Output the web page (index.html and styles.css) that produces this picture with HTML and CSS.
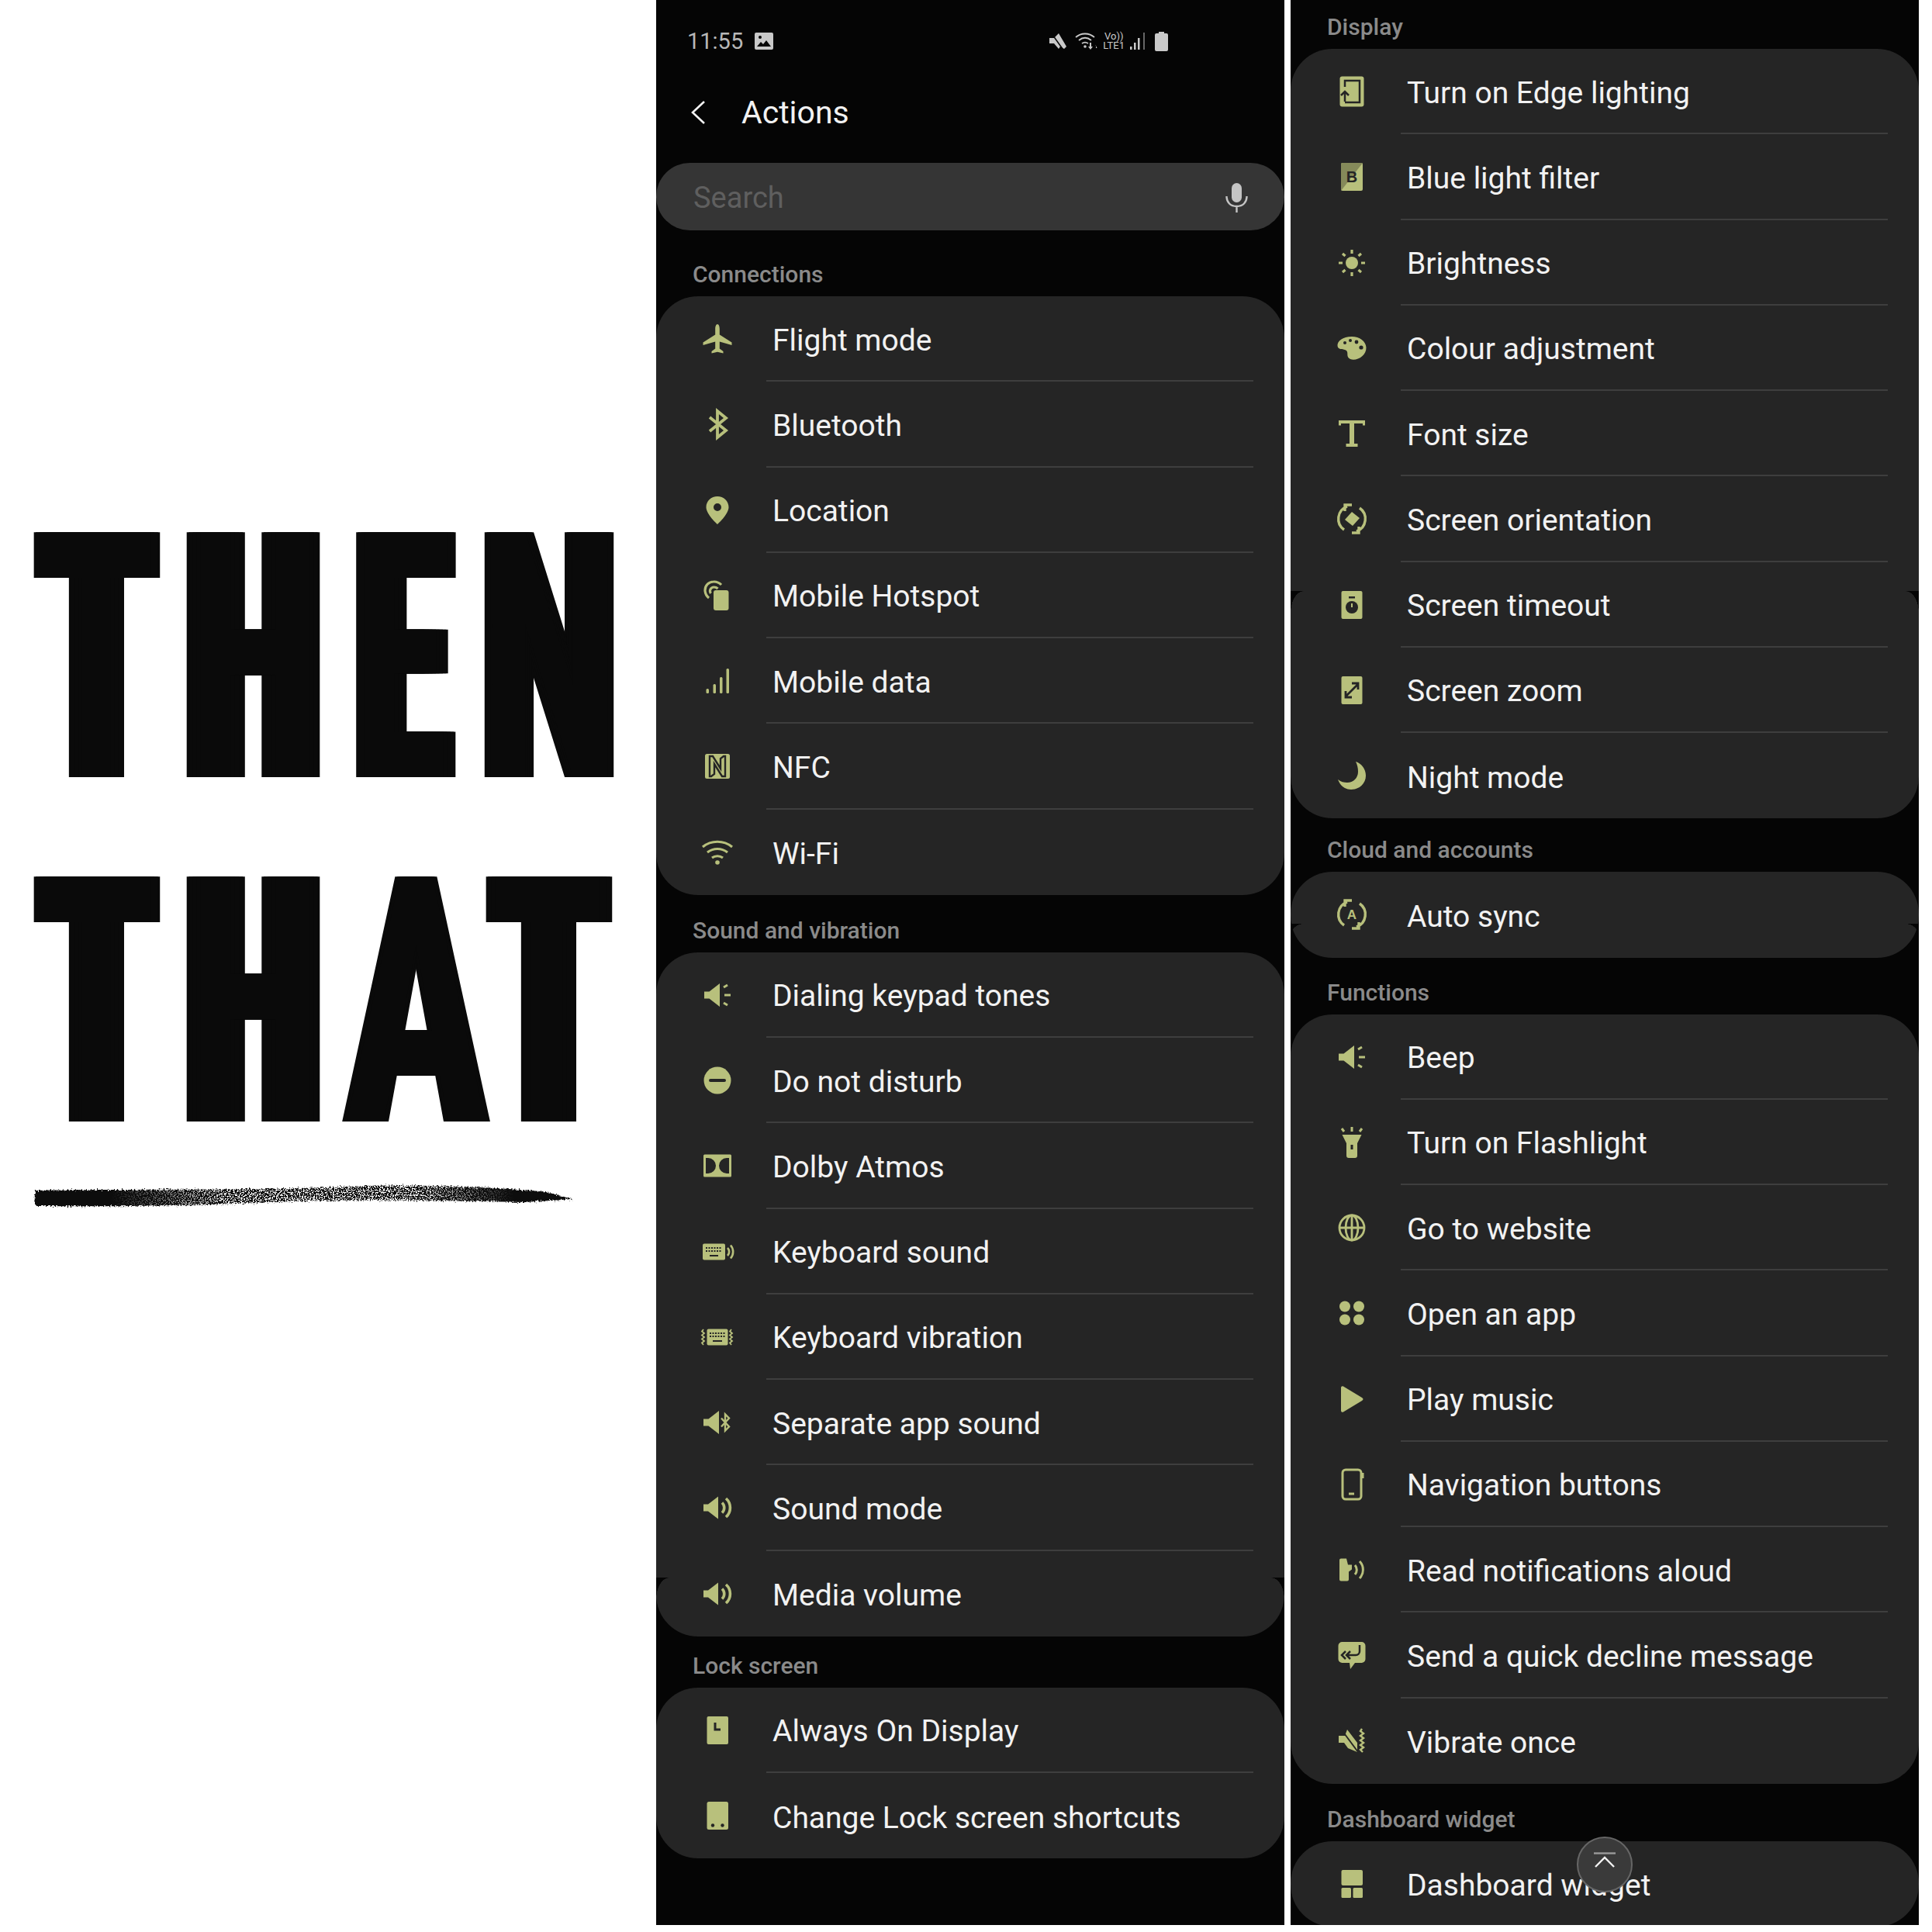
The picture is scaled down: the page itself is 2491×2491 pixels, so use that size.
FILE: index.html
```html
<!DOCTYPE html>
<html>
<head>
  <title>If This Then That - Actions</title>
  <link rel="stylesheet" href="styles.css">
</head>
<body>
  <!-- Shared icons -->
  <svg class="icon-defs" xmlns="http://www.w3.org/2000/svg">
    <symbol id="i-flight" viewBox="0 0 48 48"><path d="M24 5c1.800 0 2.800 3 2.800 6v7.500l15.700 10v3.500l-15.700-4.500v9l4.700 3.500v2.500l-7.500-1.700-7.500 1.700v-2.500l4.700-3.500v-9L5.500 32v-3.500l15.700-10V11c0-3 1-6 2.800-6z"/></symbol>
    <symbol id="i-bluetooth" viewBox="0 0 48 48"><path class="line" stroke-width="3.800" d="M14 15l21 17-11 9V7l11 9-21 17"/></symbol>
    <symbol id="i-location" viewBox="0 0 48 48"><path fill-rule="evenodd" d="M24 6C16 6 9.500 12 9.500 20c0 9 14.500 22 14.500 22s14.500-13 14.500-22C38.500 12 32 6 24 6zm0 9a5 5 0 1 1 0 10 5 5 0 0 1 0-10z"/></symbol>
    <symbol id="i-hotspot" viewBox="0 0 48 48"><rect x="19" y="17" width="19.500" height="26" rx="3"/><path class="line" stroke-width="3.200" d="M13 27a13.500 13.500 0 0 1-5-10 11 11 0 0 1 11-11 13 13 0 0 1 10 4"/><path class="line" stroke-width="3.200" d="M15.500 21a5 5 0 0 1 4-8 7 7 0 0 1 5 2"/></symbol>
    <symbol id="i-data" viewBox="0 0 48 48"><rect x="9.500" y="34" width="3.500" height="6" rx="1.500"/><rect x="18.500" y="28" width="3.500" height="12" rx="1.500"/><rect x="27" y="19" width="3.500" height="21" rx="1.500"/><rect x="35.500" y="8" width="3.500" height="32" rx="1.500"/></symbol>
    <symbol id="i-nfc" viewBox="0 0 48 48"><rect x="8" y="8" width="32" height="32" rx="2.500"/><path class="cut-line" stroke-width="2.400" d="M14 11v26h2l4-3V21l10 16h4V11h-2l-4 3v13L18 11z"/></symbol>
    <symbol id="i-wifi" viewBox="0 0 48 48"><path class="line" stroke-width="3.200" d="M5 17c11-9 27-9 38 0M11 24c8-6 18-6 26 0M17 31c4-3 10-3 14 0"/><circle cx="24" cy="37" r="2.800"/></symbol>
    <symbol id="i-beep" viewBox="0 0 48 48"><path d="M7 19.500h6.500L27 9v30L13.500 28.500H7z"/><path class="line" stroke-width="3" d="M32 14l5-3M33 24h8M32 34l5 3"/></symbol>
    <symbol id="i-dnd" viewBox="0 0 48 48"><circle cx="24" cy="24" r="17.500"/><rect class="cut" x="13" y="22" width="22" height="4" rx="2"/></symbol>
    <symbol id="i-dolby" viewBox="0 0 48 48"><rect x="6" y="9.500" width="36" height="29" rx="1.500"/><path class="cut" d="M9 14h3a10 10 0 0 1 0 20H9zM39 14h-3a10 10 0 0 0 0 20h3z"/></symbol>
    <symbol id="i-kb-sound" viewBox="0 0 48 48"><rect x="5" y="13.500" width="29" height="21" rx="2"/><path class="cut-line" stroke-width="2" stroke-dasharray="2 1.500" d="M9 19h21M9 23h21"/><path class="cut-line" stroke-width="2" d="M14 29h11"/><path class="line" stroke-width="2.600" d="M37 19a7 7 0 0 1 0 10M41 15.500a13 13 0 0 1 0 17"/></symbol>
    <symbol id="i-kb-vibrate" viewBox="0 0 48 48"><rect x="10.500" y="13.500" width="27" height="21" rx="2"/><path class="cut-line" stroke-width="2" stroke-dasharray="2 1.500" d="M14 19h20M14 23h20"/><path class="cut-line" stroke-width="2" d="M18 29h12"/><path class="line" stroke-width="1.800" d="M6 14l-2 2.500 3 2.500-3 2.500 3 2.500-3 2.500 3 2.500-3 2.500 2 2.500M42 14l-2 2.500 3 2.500-3 2.500 3 2.500-3 2.500 3 2.500-3 2.500 2 2.500"/></symbol>
    <symbol id="i-app-sound" viewBox="0 0 48 48"><path d="M6 19.500h6.500L26 9v30L12.500 28.500H6z"/><path class="line" stroke-width="2.400" d="M29 18.500l10 11-5 5v-21l5 5-10 11"/></symbol>
    <symbol id="i-sound" viewBox="0 0 48 48"><path d="M6 19.500h6L25 9.500v29L12 28.500H6z"/><path class="line" stroke-width="3.600" d="M30 17.500a9 9 0 0 1 0 13M35 12a16 16 0 0 1 0 24"/></symbol>
    <symbol id="i-aod" viewBox="0 0 48 48"><rect x="10.500" y="6" width="27.500" height="36" rx="2"/><path class="cut-line" stroke-width="3" d="M21 14v9h7"/></symbol>
    <symbol id="i-lock" viewBox="0 0 48 48"><rect x="10.500" y="6" width="27.500" height="36" rx="2.500"/><circle class="cut" cx="18" cy="36.500" r="2.200"/><circle class="cut" cx="30.500" cy="36.500" r="2.200"/></symbol>
    <symbol id="i-edge" viewBox="0 0 48 48"><rect x="8.500" y="4.500" width="31" height="39" rx="3"/><path class="cut-line" stroke-width="2.500" d="M15 18V10h19v28H15"/><path class="cut-line" stroke-width="2.500" d="M15 37V24M10 29l5-5 5 5"/></symbol>
    <symbol id="i-blue" viewBox="0 0 48 48"><rect x="10" y="6" width="28" height="36" rx="2"/><path class="tone" d="M12 6h26L10 42V8a2 2 0 0 1 2-2z"/></symbol>
    <symbol id="i-bright" viewBox="0 0 48 48"><circle cx="24" cy="24" r="8"/><path class="line" stroke-width="3.200" d="M24 7v5M24 36v5M7 24h5M36 24h5M12 12l3.500 3M36 12l-3.500 3M12 36l3.500-3M36 36l-3.500-3"/></symbol>
    <symbol id="i-palette" viewBox="0 0 48 48"><path d="M24 9C12 9 5 15 5.500 21c.5 6 8.500 3 11.500 6s-1 8 5 11c8 3 21-4 20.500-15C42 15 34 9 24 9z"/><circle class="cut" cx="15" cy="17" r="2"/><circle class="cut" cx="22" cy="14" r="2"/><circle class="cut" cx="30" cy="16" r="2.400"/><circle class="cut" cx="36" cy="23" r="2.600"/></symbol>
    <symbol id="i-font" viewBox="0 0 48 48"><path d="M7 7h34v6.500h-3V11H27v26h4.500v4h-15v-4H21V11H10v2.500H7z"/></symbol>
    <symbol id="i-orient" viewBox="0 0 48 48"><path class="line" stroke-width="3.400" d="M14 38A17 17 0 0 1 18 8M34 10a17 17 0 0 1-4 30M24 6h-9v8M24 42h9v-8"/><path d="M24 15l10 8-9 10-10-8z"/></symbol>
    <symbol id="i-timeout" viewBox="0 0 48 48"><rect x="10.500" y="6" width="27" height="36" rx="2"/><circle class="cut" cx="24" cy="27" r="8"/><rect class="cut" x="20" y="13" width="8" height="2.500"/><path class="line" stroke-width="2" d="M24 22v5"/></symbol>
    <symbol id="i-zoom" viewBox="0 0 48 48"><rect x="10.500" y="6" width="27" height="36" rx="2"/><path class="cut-line" stroke-width="2.800" d="M17 31l14-14M24 15h8v8M16 25v8h8"/></symbol>
    <symbol id="i-night" viewBox="0 0 48 48"><path d="M29 6c7 2 13 9 13 18 0 10-8 18-19 18-8 0-14-5-17-13 4 3 8 4 12 4 8 0 14-6 14-14 0-5-1-9-3-13z"/></symbol>
    <symbol id="i-sync" viewBox="0 0 48 48"><path class="line" stroke-width="3.400" d="M14 38A17 17 0 0 1 18 8M34 10a17 17 0 0 1-4 30M24 6h-9v8M24 42h9v-8"/></symbol>
    <symbol id="i-flash" viewBox="0 0 48 48"><path d="M11.500 14h25L31 25v16a3 3 0 0 1-3 3h-8a3 3 0 0 1-3-3V25z"/><rect class="cut" x="22.500" y="27" width="3" height="6"/><path class="line" stroke-width="3" d="M24 4v6M11 6l3 4M37 6l-3 4"/></symbol>
    <symbol id="i-globe" viewBox="0 0 48 48"><g class="line" stroke-width="2.800"><circle cx="24" cy="24" r="16"/><ellipse cx="24" cy="24" rx="8" ry="16"/><path d="M8 24h32M24 8v32"/></g></symbol>
    <symbol id="i-apps" viewBox="0 0 48 48"><circle cx="15" cy="15.500" r="7"/><circle cx="33" cy="15.500" r="7"/><circle cx="15" cy="32.500" r="7"/><circle cx="33" cy="32.500" r="7"/></symbol>
    <symbol id="i-play" viewBox="0 0 48 48"><path d="M10 9.500c0-2 1.500-2.800 3-2L37 22c2 1.200 2 2.800 0 4L13 40.500c-1.500.8-3 0-3-2z"/></symbol>
    <symbol id="i-nav" viewBox="0 0 48 48"><rect class="line" stroke-width="3" x="12" y="5" width="24" height="38" rx="4"/><path class="line" stroke-width="3" d="M20 36h7M38 9v7"/></symbol>
    <symbol id="i-read" viewBox="0 0 48 48"><path d="M8 11.500a2 2 0 0 1 2-2h7l2 8h5v6l-4 3v10a2 2 0 0 1-2 2H10a2 2 0 0 1-2-2z"/><path class="line" stroke-width="3" d="M28 18a9 9 0 0 1 0 12M34 13a16 16 0 0 1 0 22"/></symbol>
    <symbol id="i-decline" viewBox="0 0 48 48"><path d="M11.500 7h25a5 5 0 0 1 5 5v17a5 5 0 0 1-5 5H28l-6 8-1-8h-9.500a5 5 0 0 1-5-5V12a5 5 0 0 1 5-5z"/><path class="cut-line" stroke-width="2.500" d="M34 11v8a5 5 0 0 1-5 5H17M22 19l-5 5 5 5M16 19l-5 5 5 5"/></symbol>
    <symbol id="i-vibrate" viewBox="0 0 48 48"><path d="M7 17h8l3-8 13 17v12l-12-5-5-7H7z"/><path class="cut-line" stroke-width="2" d="M9 7l23 31"/><path class="line" stroke-width="2.400" d="M37 8l-2 3 4 3-4 3 4 3-4 3 4 3-4 3 4 3-4 3 3 3"/></symbol>
    <symbol id="i-widget" viewBox="0 0 48 48"><rect x="10.500" y="6" width="27.500" height="20" rx="2"/><rect x="10.500" y="29" width="12.500" height="13" rx="1.500"/><rect x="25.500" y="29" width="12.500" height="13" rx="1.500"/></symbol>
  </svg>

  <div class="page">
    <div class="poster">
      <h1 class="poster-word">
        <span class="glyph glyph-t">T</span><span class="glyph glyph-h">H</span><span class="glyph glyph-e">E</span><span class="glyph glyph-n">N</span>
      </h1>
      <h1 class="poster-word poster-word-second">
        <span class="glyph glyph-t">T</span><span class="glyph glyph-h">H</span><span class="glyph glyph-a">A</span><span class="glyph glyph-t glyph-t-end">T</span>
      </h1>
      <svg class="brush" viewBox="0 0 696 34" xmlns="http://www.w3.org/2000/svg">
        <defs>
          <filter id="rough" x="-2%" y="-30%" width="104%" height="160%">
            <feTurbulence type="fractalNoise" baseFrequency="0.5" numOctaves="2" seed="4"/>
            <feDisplacementMap in="SourceGraphic" scale="7"/>
          </filter>
          <filter id="grain" x="0" y="0" width="100%" height="100%">
            <feTurbulence type="fractalNoise" baseFrequency="0.6" numOctaves="3" seed="9"/>
            <feColorMatrix values="0 0 0 0 1  0 0 0 0 1  0 0 0 0 1  0 0 0 12 -6"/>
            <feComposite in2="SourceAlpha" operator="in"/>
          </filter>
          <linearGradient id="grain-fade">
            <stop offset="0" stop-color="#000"/>
            <stop offset="0.3" stop-color="#fff"/>
            <stop offset="0.75" stop-color="#fff"/>
            <stop offset="1" stop-color="#000"/>
          </linearGradient>
          <mask id="grain-mask" maskUnits="userSpaceOnUse" x="100" y="0" width="520" height="34">
            <rect x="100" y="0" width="520" height="34" fill="url(#grain-fade)"/>
          </mask>
        </defs>
        <path filter="url(#rough)" fill="#080808" d="M3 11C100 9 300 11 400 6c100-4 200 1 262 7l33 9-60 4c-100-2-200-4-300-1-100 5-200 7-330 6C1 30 1 20 3 11z"/>
        <rect filter="url(#grain)" mask="url(#grain-mask)" x="100" y="0" width="520" height="34" fill="#fff"/>
      </svg>
    </div>

    <div class="phone">
      <div class="status-bar">
        <span class="status-time">11:55</span>
        <svg class="status-image" viewBox="0 0 24 22"><path fill="#c9c9c9" fill-rule="evenodd" d="M2 0h20a2 2 0 0 1 2 2v18a2 2 0 0 1-2 2H2a2 2 0 0 1-2-2V2a2 2 0 0 1 2-2zM3 18h18l-6-8-4 5-3-3zM7 4a2 2 0 1 0 0 4 2 2 0 0 0 0-4z"/></svg>
        <div class="status-right">
          <svg class="status-mute" viewBox="0 0 24 24"><path fill="#c9c9c9" d="M1 8h6l6-6 10 17-3 3-5-3-2 3-6-7H1z"/><path stroke="#050505" stroke-width="1.500" d="M3 1l15 21"/></svg>
          <svg class="status-wifi" viewBox="0 0 30 24"><path fill="none" stroke="#c9c9c9" stroke-width="1.800" d="M1 7c7-6 17-6 24 0M5 11c5-4 11-4 16 0M9 15c3-2 5-2 8 0"/><circle cx="13" cy="19" r="1.800" fill="#c9c9c9"/><path fill="#c9c9c9" d="M19 14h2v5h2l-3 4-3-4h2zM26 17h1v4h1.500l-2-4z"/></svg>
          <div class="status-net"><span>Vo))</span><span>LTE1</span></div>
          <svg class="status-signal" viewBox="0 0 21 22"><g fill="#c9c9c9"><rect x="0" y="18" width="2.500" height="4"/><rect x="5" y="13" width="2.500" height="9"/><rect x="10" y="7" width="2.500" height="15"/></g><rect x="17" y="0" width="2" height="22" fill="#666"/></svg>
          <svg class="status-battery" viewBox="0 0 17 25"><path fill="#c9c9c9" d="M5 0h7v2h3a2 2 0 0 1 2 2v19a2 2 0 0 1-2 2H2a2 2 0 0 1-2-2V4a2 2 0 0 1 2-2h3z"/></svg>
        </div>
      </div>
      <div class="title-bar">
        <svg class="back-icon" viewBox="0 0 20 30"><path fill="none" stroke="#f2f2f2" stroke-width="2.600" d="M18 1L3 15l15 14"/></svg>
        <span class="title">Actions</span>
      </div>
      <div class="search">
        <span class="search-text">Search</span>
        <svg class="mic-icon" viewBox="0 0 29 38"><rect x="8" y="0" width="13" height="25" rx="6.500" fill="#c4c4c4"/><path fill="none" stroke="#c4c4c4" stroke-width="2.400" d="M1.500 17c0 8 5 13 13 13s13-5 13-13M14.500 30v8"/></svg>
      </div>

      <div class="section-label section-label-connections">Connections</div>
      <div class="card">
        <div class="row"><svg class="row-icon"><use href="#i-flight"/></svg><div class="row-text">Flight mode</div></div>
        <div class="row"><svg class="row-icon"><use href="#i-bluetooth"/></svg><div class="row-text">Bluetooth</div></div>
        <div class="row"><svg class="row-icon"><use href="#i-location"/></svg><div class="row-text">Location</div></div>
        <div class="row"><svg class="row-icon"><use href="#i-hotspot"/></svg><div class="row-text">Mobile Hotspot</div></div>
        <div class="row"><svg class="row-icon"><use href="#i-data"/></svg><div class="row-text">Mobile data</div></div>
        <div class="row"><svg class="row-icon"><use href="#i-nfc"/></svg><div class="row-text">NFC</div></div>
        <div class="row"><svg class="row-icon"><use href="#i-wifi"/></svg><div class="row-text">Wi-Fi</div></div>
      </div>

      <div class="section-label">Sound and vibration</div>
      <div class="card">
        <div class="row"><svg class="row-icon"><use href="#i-beep"/></svg><div class="row-text">Dialing keypad tones</div></div>
        <div class="row"><svg class="row-icon"><use href="#i-dnd"/></svg><div class="row-text">Do not disturb</div></div>
        <div class="row"><svg class="row-icon"><use href="#i-dolby"/></svg><div class="row-text">Dolby Atmos</div></div>
        <div class="row"><svg class="row-icon"><use href="#i-kb-sound"/></svg><div class="row-text">Keyboard sound</div></div>
        <div class="row"><svg class="row-icon"><use href="#i-kb-vibrate"/></svg><div class="row-text">Keyboard vibration</div></div>
        <div class="row"><svg class="row-icon"><use href="#i-app-sound"/></svg><div class="row-text">Separate app sound</div></div>
        <div class="row"><svg class="row-icon"><use href="#i-sound"/></svg><div class="row-text">Sound mode</div></div>
        <div class="row"><svg class="row-icon"><use href="#i-sound"/></svg><div class="row-text">Media volume</div></div>
        <!-- screenshot seam, the capture was stitched here -->
        <span class="notch notch-left notch-media"></span>
        <span class="notch notch-right notch-media"></span>
      </div>

      <div class="section-label section-label-lock">Lock screen</div>
      <div class="card">
        <div class="row"><svg class="row-icon"><use href="#i-aod"/></svg><div class="row-text">Always On Display</div></div>
        <div class="row"><svg class="row-icon"><use href="#i-lock"/></svg><div class="row-text">Change Lock screen shortcuts</div></div>
      </div>
    </div>

    <div class="phone phone-second">
      <div class="section-label section-label-first">Display</div>
      <div class="card">
        <div class="row"><svg class="row-icon"><use href="#i-edge"/></svg><div class="row-text">Turn on Edge lighting</div></div>
        <div class="row"><svg class="row-icon" viewBox="0 0 48 48"><use href="#i-blue"/><text class="icon-letter icon-letter-b" x="24" y="31" text-anchor="middle">B</text></svg><div class="row-text">Blue light filter</div></div>
        <div class="row"><svg class="row-icon"><use href="#i-bright"/></svg><div class="row-text">Brightness</div></div>
        <div class="row"><svg class="row-icon"><use href="#i-palette"/></svg><div class="row-text">Colour adjustment</div></div>
        <div class="row"><svg class="row-icon"><use href="#i-font"/></svg><div class="row-text">Font size</div></div>
        <div class="row"><svg class="row-icon"><use href="#i-orient"/></svg><div class="row-text">Screen orientation</div></div>
        <div class="row"><svg class="row-icon"><use href="#i-timeout"/></svg><div class="row-text">Screen timeout</div></div>
        <div class="row"><svg class="row-icon"><use href="#i-zoom"/></svg><div class="row-text">Screen zoom</div></div>
        <div class="row"><svg class="row-icon"><use href="#i-night"/></svg><div class="row-text">Night mode</div></div>
        <span class="notch notch-left notch-timeout"></span>
        <span class="notch notch-right notch-timeout"></span>
      </div>

      <div class="section-label section-label-cloud">Cloud and accounts</div>
      <div class="card">
        <div class="row"><svg class="row-icon" viewBox="0 0 48 48"><use href="#i-sync"/><text class="icon-letter icon-letter-a" x="24" y="30" text-anchor="middle">A</text></svg><div class="row-text">Auto sync</div></div>
        <span class="notch notch-left notch-sync"></span>
        <span class="notch notch-right notch-sync"></span>
      </div>

      <div class="section-label section-label-functions">Functions</div>
      <div class="card">
        <div class="row"><svg class="row-icon"><use href="#i-beep"/></svg><div class="row-text">Beep</div></div>
        <div class="row"><svg class="row-icon"><use href="#i-flash"/></svg><div class="row-text">Turn on Flashlight</div></div>
        <div class="row"><svg class="row-icon"><use href="#i-globe"/></svg><div class="row-text">Go to website</div></div>
        <div class="row"><svg class="row-icon"><use href="#i-apps"/></svg><div class="row-text">Open an app</div></div>
        <div class="row"><svg class="row-icon"><use href="#i-play"/></svg><div class="row-text">Play music</div></div>
        <div class="row"><svg class="row-icon"><use href="#i-nav"/></svg><div class="row-text">Navigation buttons</div></div>
        <div class="row"><svg class="row-icon"><use href="#i-read"/></svg><div class="row-text">Read notifications aloud</div></div>
        <div class="row"><svg class="row-icon"><use href="#i-decline"/></svg><div class="row-text">Send a quick decline message</div></div>
        <div class="row"><svg class="row-icon"><use href="#i-vibrate"/></svg><div class="row-text">Vibrate once</div></div>
      </div>

      <div class="section-label">Dashboard widget</div>
      <div class="card">
        <div class="row"><svg class="row-icon"><use href="#i-widget"/></svg><div class="row-text">Dashboard widget</div></div>
      </div>

      <div class="scroll-top">
        <svg class="scroll-top-icon" viewBox="0 0 28 20"><path fill="none" stroke="#9a9a9a" stroke-width="2.400" d="M0 1.500h28"/><path fill="none" stroke="#f2f2f2" stroke-width="2.400" d="M2 19L14 7l12 12"/></svg>
      </div>
    </div>
  </div>
</body>
</html>
```

FILE: styles.css
```css
body {
  margin: 0;
  background: #fff;
  font-family: Roboto, "Liberation Sans", sans-serif;
}

.icon-defs {
  position: absolute;
  width: 0;
  height: 0;
}

.page {
  display: flex;
  height: 2482px;
}

/* Left poster */
.poster {
  width: 846px;
  flex-shrink: 0;
  padding: 686px 0 0 43px;
  box-sizing: border-box;
}

.poster-word {
  display: flex;
  height: 316px;
  margin: 0;
  font-family: Roboto, sans-serif;
  font-weight: 900;
  font-size: 444px;
  line-height: 316px;
  color: #0a0a0a;
}

.poster-word-second {
  margin-top: 128px;
}

.glyph {
  display: flex;
  justify-content: center;
  flex-shrink: 0;
  text-shadow: 10px 0 #0a0a0a, -10px 0 #0a0a0a, 20px 0 #0a0a0a, -20px 0 #0a0a0a, 30px 0 #0a0a0a, -30px 0 #0a0a0a, 35px 0 #0a0a0a, -35px 0 #0a0a0a;
}

.glyph-t {
  width: 164px;
  transform: translateY(6px) scaleX(0.487);
}

.glyph-t-end {
  margin-left: -5px;
}

.glyph-h {
  width: 173px;
  margin-left: 33px;
  transform: translateY(6px) scaleX(0.514);
}

.glyph-e {
  width: 131px;
  margin-left: 41px;
  transform: translateY(6px) scaleX(0.446);
}

.glyph-n {
  width: 168px;
  margin-left: 39px;
  transform: translateY(6px) scaleX(0.55);
  text-shadow: 5px 0 #0a0a0a, -5px 0 #0a0a0a, 10px 0 #0a0a0a, -10px 0 #0a0a0a, 15px 0 #0a0a0a, -15px 0 #0a0a0a, 19.5px 0 #0a0a0a, -19.5px 0 #0a0a0a;
}

.glyph-a {
  width: 189px;
  margin-left: 29px;
  transform: translateY(6px) scaleX(0.588);
  text-shadow: 5px 0 #0a0a0a, -5px 0 #0a0a0a, 10px 0 #0a0a0a, -10px 0 #0a0a0a;
}

.brush {
  display: block;
  width: 696px;
  height: 34px;
  margin-top: 78px;
}

/* Phone screens */
.phone {
  position: relative;
  width: 810px;
  flex-shrink: 0;
  background: #050505;
  overflow: hidden;
  color: #f2f2f2;
}

.phone-second {
  margin-left: 8px;
}

.status-bar {
  display: flex;
  align-items: center;
  height: 106px;
  padding-left: 40px;
  color: #b8b8b8;
}

.status-time {
  font-size: 29px;
}

.status-image {
  width: 24px;
  height: 22px;
  margin-left: 15px;
}

.status-right {
  display: flex;
  align-items: center;
  margin-left: 355px;
}

.status-mute {
  width: 24px;
  height: 24px;
}

.status-wifi {
  width: 30px;
  height: 24px;
  margin-left: 10px;
}

.status-net {
  display: flex;
  flex-direction: column;
  width: 30px;
  margin-left: 5px;
  font-size: 13px;
  line-height: 12px;
  color: #c9c9c9;
  text-align: center;
}

.status-signal {
  width: 21px;
  height: 22px;
  margin-left: 6px;
}

.status-battery {
  width: 17px;
  height: 25px;
  margin-left: 11px;
}

.title-bar {
  display: flex;
  align-items: center;
  height: 78px;
  padding-left: 44px;
}

.back-icon {
  width: 20px;
  height: 30px;
}

.title {
  margin-left: 46px;
  font-size: 41px;
}

.search {
  display: flex;
  align-items: center;
  justify-content: space-between;
  height: 87px;
  margin-top: 26px;
  padding: 2px 47px 0 48px;
  box-sizing: border-box;
  border-radius: 44px;
  background: #353535;
}

.search-text {
  font-size: 38px;
  color: #5f5f5f;
}

.mic-icon {
  width: 29px;
  height: 38px;
}

.section-label {
  height: 38px;
  margin-top: 27px;
  padding: 0 0 9px 47px;
  font-size: 30px;
  font-weight: 500;
  line-height: 38px;
  color: #8a8a8a;
}

.section-label-connections {
  margin-top: 38px;
}

.section-label-first {
  margin-top: 16px;
}

.section-label-cloud {
  margin-top: 22px;
}

.section-label-functions {
  margin-top: 26px;
}

.section-label-lock {
  margin-top: 19px;
}

.card {
  position: relative;
  border-radius: 54px;
  background: #252525;
}

.row {
  display: flex;
  height: 110.250px;
  align-items: center;
}

.row-icon {
  width: 48px;
  height: 48px;
  margin: 0 39px 0 55px;
  flex-shrink: 0;
  fill: #b8c07c;
  color: #b8c07c;
}

.row-text {
  flex: 1;
  display: flex;
  align-items: center;
  height: 100%;
  margin-right: 40px;
  padding: 5px 0 0 8px;
  font-size: 39px;
  box-sizing: border-box;
  border-bottom: 2px solid #3e3e3e;
}

.row:last-of-type .row-text {
  border-bottom: none;
}

.line {
  fill: none;
  stroke: #b8c07c;
}

.cut {
  fill: #252525;
}

.cut-line {
  fill: none;
  stroke: #252525;
}

.tone {
  fill: #858a5a;
}

.icon-letter {
  font-family: "Liberation Sans", sans-serif;
  font-weight: 700;
}

.icon-letter-b {
  fill: #252525;
  font-size: 20px;
}

.icon-letter-a {
  font-size: 17px;
}

/* Leftovers of the screenshot stitching */
.notch {
  position: absolute;
  width: 17px;
  height: 28px;
}

.notch-left {
  left: 0;
  background: radial-gradient(ellipse 100% 100% at 100% 100%, transparent 98%, #050505 100%);
}

.notch-right {
  right: 0;
  background: radial-gradient(ellipse 100% 100% at 0 100%, transparent 98%, #050505 100%);
}

.notch-media {
  top: 806px;
}

.notch-timeout {
  top: 699px;
}

.notch-sync {
  top: 67px;
  height: 16px;
}

.scroll-top {
  position: absolute;
  left: 369px;
  top: 2368px;
  display: flex;
  align-items: center;
  justify-content: center;
  width: 68px;
  height: 68px;
  border: 2px solid #666;
  border-radius: 50%;
  background: #3a3a3a;
}

.scroll-top-icon {
  width: 28px;
  height: 20px;
  margin-bottom: 12px;
}
```
